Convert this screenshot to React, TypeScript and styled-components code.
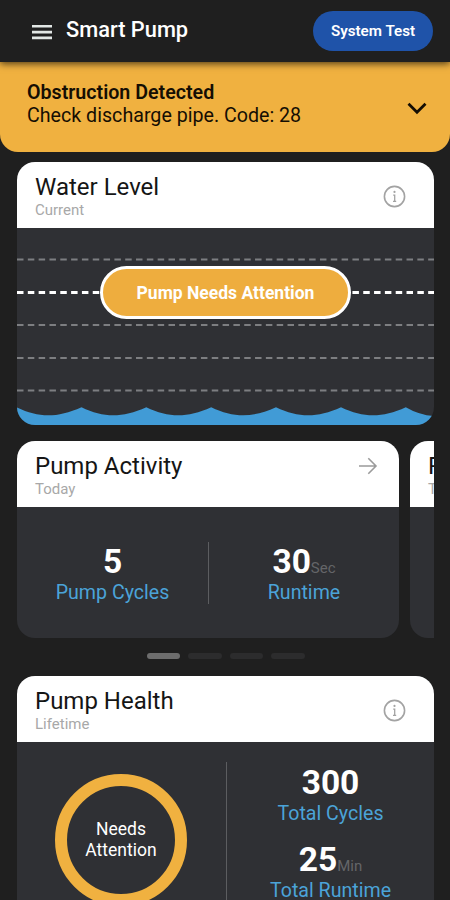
import React from 'react';
import styled, { createGlobalStyle } from 'styled-components';

const GlobalStyle = createGlobalStyle`
  * { box-sizing: border-box; }
  body { margin: 0; background: #1f1f1f; overflow: hidden; }
  p, h1, h2 { margin: 0; font-weight: 400; }
`;

const Screen = styled.div`
  width: 450px;
  height: 900px;
  overflow: hidden;
  display: flex;
  flex-direction: column;
  background: #1f1f1f;
  font-family: Roboto, sans-serif;
`;

const AppBar = styled.header`
  flex: none;
  position: relative;
  z-index: 1;
  height: 62px;
  padding: 0 17px 0 32px;
  display: flex;
  align-items: center;
  background: #1f1f1f;
  box-shadow: 0 2px 7px rgba(0, 0, 0, 0.65);
`;

const MenuIcon = styled.svg`
  width: 20px;
  height: 16px;
  margin-top: 2px;
`;

const AppTitle = styled.h1`
  flex: 1;
  margin: 0 0 3px 14px;
  font-size: 21.8px;
  font-weight: 500;
  line-height: 28px;
  color: #fff;
`;

const TestButton = styled.button`
  width: 120px;
  height: 40px;
  padding: 0;
  border: 0;
  border-radius: 20px;
  background: #1f53a9;
  color: #fff;
  font: 600 15.2px/41px Roboto, sans-serif;
`;

const Banner = styled.section`
  flex: none;
  height: 90px;
  padding: 4px 23px 0 27px;
  display: flex;
  align-items: center;
  justify-content: space-between;
  border-radius: 0 0 18px 18px;
  background: #f0b140;
  color: #150e03;
`;

const BannerText = styled.p<{ $strong?: boolean }>`
  margin-bottom: ${(p) => (p.$strong ? 0 : '10px')};
  font-size: 19.65px;
  line-height: 23px;
  font-weight: ${(p) => (p.$strong ? 600 : 400)};
`;

const Chevron = styled.svg`
  width: 20px;
  height: 13px;
  margin-bottom: 2px;
`;

const Content = styled.main`
  flex: none;
  padding: 10px 16px 0 17px;
`;

const Card = styled.section<{ $width?: number; $height: number }>`
  flex: none;
  width: ${(p) => (p.$width ? `${p.$width}px` : 'auto')};
  height: ${(p) => p.$height}px;
  border-radius: 18px;
  overflow: hidden;
  display: flex;
  flex-direction: column;
  background: #2f3034;
`;

const CardHeader = styled.header`
  flex: none;
  height: 66px;
  padding: 11px 28px 0 18px;
  display: flex;
  justify-content: space-between;
  background: #fff;
`;

const CardTitle = styled.h2`
  font-size: 24px;
  line-height: 28px;
  color: #151515;
  white-space: nowrap;
`;

const CardSubtitle = styled.p`
  font-size: 15px;
  line-height: 18px;
  color: #a8a8a8;
`;

const InfoIcon = styled.svg`
  width: 23px;
  height: 23px;
  margin-top: 12px;
`;

const ArrowIcon = styled.svg`
  width: 20px;
  height: 18px;
  margin: 5px -7px 0 0;
`;

const Tank = styled.div`
  flex: 1;
  display: grid;
  grid-template-areas: 'stack';
`;

const TankScene = styled.svg`
  grid-area: stack;
  width: 417px;
  height: 197px;
`;

const StatusPill = styled.div`
  grid-area: stack;
  justify-self: center;
  width: 251px;
  height: 53px;
  margin-top: 38px;
  border: 3px solid #fff;
  border-radius: 27px;
  background: #eead3e;
  color: #fff;
  text-align: center;
  font-size: 17.5px;
  font-weight: 700;
  line-height: 48px;
`;

const Carousel = styled.div`
  display: flex;
  gap: 11px;
  margin-top: 16px;
  overflow: hidden;
`;

const ActivityBody = styled.div`
  flex: 1;
  display: grid;
  grid-template-columns: 191px 1px 190px;
  align-items: center;
`;

const Divider = styled.div<{ $height: number }>`
  width: 1px;
  height: ${(p) => p.$height}px;
  background: #5c5d60;
`;

const Stat = styled.div`
  text-align: center;
`;

const StatValue = styled.p`
  height: 36px;
  font-size: 33.5px;
  font-weight: 700;
  line-height: 39px;
  color: #fff;
`;

const Unit = styled.span`
  font-size: 15px;
  font-weight: 400;
  line-height: 1;
  color: #646568;
`;

const StatLabel = styled.p`
  height: 26px;
  font-size: 19.6px;
  line-height: 29px;
  color: #4ba3d8;
`;

const Pager = styled.div`
  display: flex;
  justify-content: center;
  gap: 8px;
  margin: 15px 0 17px;
`;

const PagerDash = styled.span<{ $active?: boolean }>`
  width: 33.5px;
  height: 6px;
  border-radius: 3px;
  background: ${(p) => (p.$active ? '#6d6d6d' : '#2c2c2d')};
`;

const HealthBody = styled.div`
  flex: 1;
  display: grid;
  grid-template-columns: 209px 1px 207px;
  align-items: start;
  padding-top: 20px;
`;

const HealthRing = styled.div`
  width: 132px;
  height: 132px;
  margin: 12px 0 0 38px;
  border: 12px solid #f0b140;
  border-radius: 50%;
  display: flex;
  align-items: center;
  justify-content: center;
  text-align: center;
  color: #fff;
  font-size: 17.5px;
  line-height: 21px;
`;

const HealthStats = styled.div`
  display: flex;
  flex-direction: column;
  gap: 15px;
  padding-top: 1px;
`;

const levels = [31.5, 97, 130, 162.5];

function Info() {
  return (
    <InfoIcon viewBox="0 0 23 23" fill="none" stroke="#a3a3a3">
      <circle cx="11.5" cy="11.5" r="10.1" strokeWidth="1.6" />
      <path d="M10.200 10.200h1.500v6M10 16.300h3.200" strokeWidth="1.3" />
      <circle cx="11.500" cy="6.900" r="1.100" fill="#a3a3a3" stroke="none" />
    </InfoIcon>
  );
}

function Heading({ title, subtitle, children }: { title: string; subtitle: string; children?: React.ReactNode }) {
  return (
    <CardHeader>
      <div>
        <CardTitle>{title}</CardTitle>
        <CardSubtitle>{subtitle}</CardSubtitle>
      </div>
      {children}
    </CardHeader>
  );
}

function Metric({ value, unit, label }: { value: string; unit?: string; label: string }) {
  return (
    <Stat>
      <StatValue>
        {value}
        {unit && <Unit>{unit}</Unit>}
      </StatValue>
      <StatLabel>{label}</StatLabel>
    </Stat>
  );
}

export default function App() {
  return (
    <>
      <GlobalStyle />
      <Screen>
        <AppBar>
          <MenuIcon viewBox="0 0 20 16" stroke="#e2e7e5" strokeWidth="2.6">
            <path d="M0 2.300h20M0 8.100h20M0 13.900h20" />
          </MenuIcon>
          <AppTitle>Smart Pump</AppTitle>
          <TestButton>System Test</TestButton>
        </AppBar>
        <Banner>
          <div>
            <BannerText $strong>Obstruction Detected</BannerText>
            <BannerText>Check discharge pipe. Code: 28</BannerText>
          </div>
          <Chevron viewBox="0 0 20 13" fill="none" stroke="#150e03" strokeWidth="2.8">
            <path d="M1.5 1.8 10 10.2l8.5-8.4" />
          </Chevron>
        </Banner>
        <Content>
          <Card $height={263}>
            <Heading title="Water Level" subtitle="Current">
              <Info />
            </Heading>
            <Tank>
              <TankScene viewBox="0 0 417 197" fill="none">
                {levels.map((y) => (
                  <path key={y} d={`M0 ${y}h417`} stroke="#7d7e81" strokeWidth="2" strokeDasharray="6.5 4.32" />
                ))}
                <path d="M0 64.5h417" stroke="#fff" strokeWidth="3" strokeDasharray="6.5 4.32" />
                <path
                  d="M0 179.500C22 190 40 190 64.500 179.200C87 190 105 190 129.300 179.200C152 190 170 190 194.200 179.200C217 190 235 190 259 179.200C282 190 300 190 324 179.200C347 190 365 190 388.800 179.200Q402 187 417 188V197H0Z"
                  fill="#419bd6"
                />
              </TankScene>
              <StatusPill>Pump Needs Attention</StatusPill>
            </Tank>
          </Card>
          <Carousel>
            <Card $width={382} $height={197}>
              <Heading title="Pump Activity" subtitle="Today">
                <ArrowIcon viewBox="0 0 20 18" fill="none" stroke="#9b9b9b" strokeWidth="1.6">
                  <path d="M1 9h17M10.300 1.200 18 9l-7.700 7.800" />
                </ArrowIcon>
              </Heading>
              <ActivityBody>
                <Metric value="5" label="Pump Cycles" />
                <Divider $height={62} />
                <Metric value="30" unit="Sec" label="Runtime" />
              </ActivityBody>
            </Card>
            <Card $width={382} $height={197}>
              <Heading title="Pump Activity" subtitle="Today" />
            </Card>
          </Carousel>
          <Pager>
            <PagerDash $active />
            <PagerDash />
            <PagerDash />
            <PagerDash />
          </Pager>
          <Card $height={263}>
            <Heading title="Pump Health" subtitle="Lifetime">
              <Info />
            </Heading>
            <HealthBody>
              <HealthRing>
                Needs
                <br />
                Attention
              </HealthRing>
              <Divider $height={177} />
              <HealthStats>
                <Metric value="300" label="Total Cycles" />
                <Metric value="25" unit="Min" label="Total Runtime" />
              </HealthStats>
            </HealthBody>
          </Card>
        </Content>
      </Screen>
    </>
  );
}
